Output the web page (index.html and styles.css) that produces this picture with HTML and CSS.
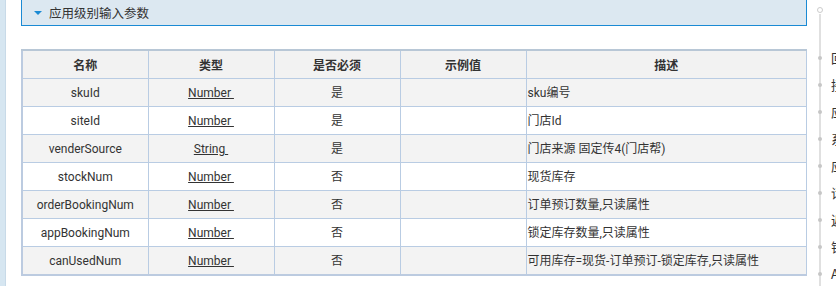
FILE: index.html
```html
<!DOCTYPE html>
<html lang="zh-CN">
<head>
<meta charset="utf-8">
<link rel="stylesheet" href="styles.css">
</head>
<body>
<div class="page">
  <div class="side-strip"></div>
  <div class="main">
    <div class="section-bar">
      <span class="caret"></span>
      <span class="section-title">应用级别输入参数</span>
    </div>
    <table class="params">
      <colgroup>
        <col class="c1"><col class="c2"><col class="c3"><col class="c4"><col class="c5">
      </colgroup>
      <thead>
        <tr><th>名称</th><th>类型</th><th>是否必须</th><th>示例值</th><th>描述</th></tr>
      </thead>
      <tbody>
        <tr><td>skuId</td><td><a class="type">Number&nbsp;</a></td><td>是</td><td></td><td class="desc">sku编号</td></tr>
        <tr><td>siteId</td><td><a class="type">Number&nbsp;</a></td><td>是</td><td></td><td class="desc">门店Id</td></tr>
        <tr><td>venderSource</td><td><a class="type">String&nbsp;</a></td><td>是</td><td></td><td class="desc">门店来源 固定传4(门店帮)</td></tr>
        <tr><td>stockNum</td><td><a class="type">Number&nbsp;</a></td><td>否</td><td></td><td class="desc">现货库存</td></tr>
        <tr><td>orderBookingNum</td><td><a class="type">Number&nbsp;</a></td><td>否</td><td></td><td class="desc">订单预订数量,只读属性</td></tr>
        <tr><td>appBookingNum</td><td><a class="type">Number&nbsp;</a></td><td>否</td><td></td><td class="desc">锁定库存数量,只读属性</td></tr>
        <tr><td>canUsedNum</td><td><a class="type">Number&nbsp;</a></td><td>否</td><td></td><td class="desc">可用库存=现货-订单预订-锁定库存,只读属性</td></tr>
      </tbody>
    </table>
  </div>
  <nav class="toc">
    <span class="toc-start"></span>
    <ul class="toc-list">
      <li>回调地址</li>
      <li>接口描述</li>
      <li>应用级别输入参数</li>
      <li>系统级别输入参数</li>
      <li>应用级别输出参数</li>
      <li>请求示例</li>
      <li>返回示例</li>
      <li>错误码</li>
      <li>API工具</li>
    </ul>
  </nav>
</div>
</body>
</html>
```

FILE: styles.css
```css
html, body {
  margin: 0;
  padding: 0;
  background: #ffffff;
  overflow: hidden;
}
body {
  font-family: Roboto, "Noto Sans CJK SC", sans-serif;
  font-size: 12px;
  color: #333333;
}
.page {
  display: flex;
  width: 836px;
  height: 286px;
  overflow: hidden;
}
.side-strip {
  width: 5px;
  flex: none;
  background: #d6e6f1;
  border-right: 1px solid #c8dae8;
}
.main {
  width: 786px;
  flex: none;
  margin-left: 15px;
}
.section-bar {
  height: 25px;
  background: #dce8f1;
  border: 1px solid #1a8ad4;
  border-top: none;
  display: flex;
  align-items: center;
  padding-left: 12px;
  box-sizing: content-box;
}
.caret {
  width: 0;
  height: 0;
  border-left: 4px solid transparent;
  border-right: 4px solid transparent;
  border-top: 4px solid #1a8ad4;
  margin-right: 7px;
  margin-top: 1px;
}
.section-title {
  font-family: "Noto Sans CJK SC", sans-serif;
  font-size: 12.5px;
  color: #333333;
}
.params {
  margin-top: 23px;
  width: 786px;
  border-collapse: collapse;
  table-layout: fixed;
  border-top: 2px solid #b8c7d6;
  border-left: 2px solid #bccbe0;
  border-right: 1px solid #bccbe0;
  border-bottom: 2px solid #bccbe0;
}
.c1, .c2, .c3, .c4 { width: 126px; }
.params th, .params td {
  height: 27px;
  padding: 0;
  border: 1px solid #b9cce3;
  text-align: center;
  vertical-align: middle;
  line-height: 16px;
}
.params th {
  background: #f2f2f2;
  font-family: "Noto Sans CJK SC", sans-serif;
  font-weight: bold;
  font-size: 12px;
  color: #333333;
}
.params tbody tr:nth-child(odd) td { background: #f3f3f3; }
.params tbody tr:nth-child(even) td { background: #ffffff; }
.params td.desc {
  text-align: left;
  padding-left: 1px;
}
.type {
  color: #333333;
  text-decoration: underline;
}
.toc {
  position: relative;
  flex: 1;
  margin-left: 12px;
  height: 286px;
}
.toc::before {
  content: "";
  position: absolute;
  left: 0;
  top: 14px;
  bottom: 0;
  width: 2px;
  background: #e0e0e0;
}
.toc-start {
  position: absolute;
  left: -3px;
  top: 7px;
  width: 6px;
  height: 6px;
  border: 1px solid #cccccc;
  border-radius: 50%;
  background: #ffffff;
  box-sizing: border-box;
  transform: translateX(1px);
}
.toc-list {
  list-style: none;
  margin: 0;
  padding: 49px 0 0 0;
}
.toc-list li {
  position: relative;
  height: 27px;
  line-height: 18px;
  padding-left: 12px;
  white-space: nowrap;
  font-family: "Noto Sans CJK SC", sans-serif;
  font-size: 13px;
  color: #333333;
}
.toc-list li::before {
  content: "";
  position: absolute;
  left: -1px;
  top: 7px;
  width: 4px;
  height: 4px;
  border-radius: 50%;
  background: #c6c6c6;
}
```
